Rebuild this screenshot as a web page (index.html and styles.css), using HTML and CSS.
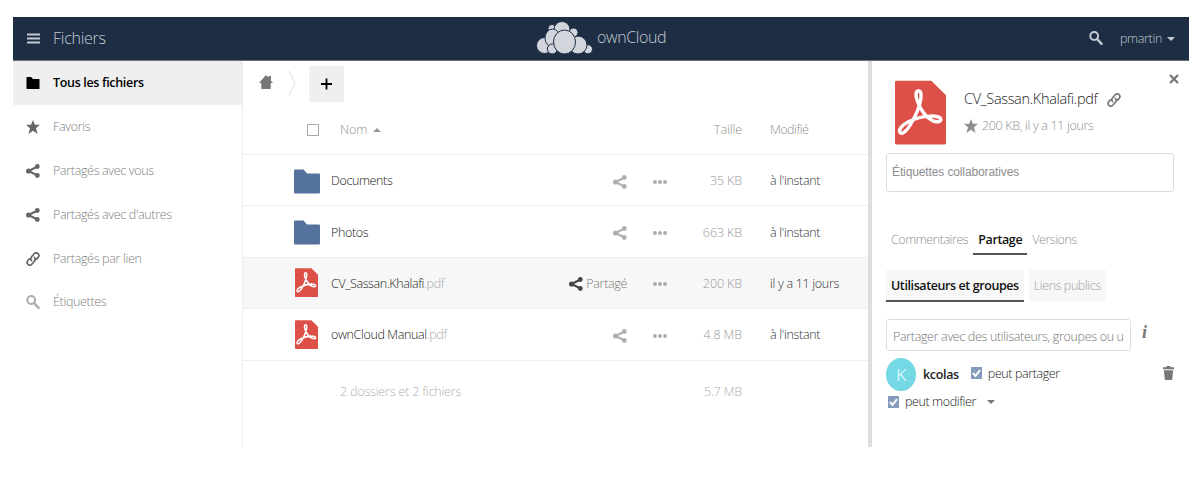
FILE: index.html
```html
<!DOCTYPE html>
<html lang="fr">
<head>
<meta charset="utf-8">
<title>Fichiers - ownCloud</title>
<link rel="stylesheet" href="styles.css">
</head>
<body>
<svg class="defs" width="0" height="0">
  <symbol id="share" viewBox="0 0 14 14"><path d="M11.5 2.5 2.5 7l9 4.5" fill="none" stroke="currentColor" stroke-width="2"/><circle cx="11.3" cy="2.5" r="2.4"/><circle cx="2.6" cy="7" r="2.6"/><circle cx="11.3" cy="11.5" r="2.4"/></symbol>
  <symbol id="star" viewBox="0 0 14 14"><path d="m7 0 1.900 4.800H14L10 8.300 11.600 14 7 10.800 2.400 14 4 8.300 0 4.800h5.100z"/></symbol>
  <symbol id="link" viewBox="0 0 14 14"><g fill="none" stroke="currentColor" stroke-width="1.7" stroke-linecap="round"><path d="M5.600 8.700C4.500 7.500 4.900 5.600 5.800 4.500L8 2c1.200-1.300 2.900-1.400 4-.4 1.200 1.100 1 2.900 0 4.100L10.600 7.200"/><path d="M8.400 5.300c1.100 1.200.7 3.100-.2 4.200L6 12c-1.200 1.300-2.900 1.400-4 .4-1.200-1.100-1-2.900 0-4.100L3.400 6.800"/></g></symbol>
  <symbol id="search" viewBox="0 0 14 14"><circle cx="5.200" cy="5" r="3.900" fill="none" stroke="currentColor" stroke-width="2"/><path d="m8 8 4.600 4.800" fill="none" stroke="currentColor" stroke-width="2.400" stroke-linecap="round"/></symbol>
  <symbol id="folder" viewBox="0 0 26 24"><path d="M1 0h8.500l3.500 4h12q1 0 1 1v18q0 1-1 1H1q-1 0-1-1V1q0-1 1-1z"/></symbol>
  <symbol id="pdf" viewBox="0 0 52 65"><path d="M1.500 0H37l15 15v48.500q0 1.500-1.500 1.500h-49Q0 65 0 63.500v-62Q0 0 1.500 0z" fill="#dd5047"/><path d="M24 10.500c-3.500 0-3 6-.8 11.500 2.500 6.500 8 15 14.500 18.500 5 2.500 9 1.500 9-.8 0-2.700-5-3.800-11-3.500-7 .3-15 2.300-22 5.800-6 3-10.500 8-8.700 10.700 2 2.800 7-1.200 11-8.200 5-8.500 9-18 10.200-25 .8-5 .5-9-2.200-9z" fill="none" stroke="#fff" stroke-width="3.500"/></symbol>
  <symbol id="dots" viewBox="0 0 14 4"><circle cx="2" cy="2" r="1.900"/><circle cx="7" cy="2" r="1.900"/><circle cx="12" cy="2" r="1.900"/></symbol>
  <symbol id="check" viewBox="0 0 11 12"><path d="M0 0h11v12H0z" fill="#869bbb"/><path d="m2 6 2.500 3L9 3.200" fill="none" stroke="#fff" stroke-width="2"/></symbol>
</svg>
<div class="app">
  <header class="topbar">
    <div class="menu">
      <svg class="burger" viewBox="0 0 13 11"><path d="M0 1.500h13M0 5.500h13M0 9.500h13" stroke="currentColor" stroke-width="2"/></svg>
      <span class="app-name">Fichiers</span>
    </div>
    <div class="brand">
      <svg class="logo" viewBox="0 0 56 34"><g fill="#d2d6dc" stroke="#1d2d44" stroke-width="1">
        <circle cx="15.500" cy="7.500" r="4"/><circle cx="37" cy="11.500" r="4.500"/><circle cx="25.500" cy="8.500" r="8"/><circle cx="8" cy="24.500" r="8"/><ellipse cx="16" cy="17" rx="7.500" ry="9"/><circle cx="51.500" cy="28.300" r="4.500"/><circle cx="41.500" cy="24" r="9"/><circle cx="15.800" cy="28" r="5"/><ellipse cx="28" cy="21" rx="11" ry="12"/></g></svg>
      <span class="brand-name">ownCloud</span>
    </div>
    <div class="user">
      <svg class="ico user-search"><use href="#search"/></svg>
      <span class="user-name">pmartin</span><i class="caret"></i>
    </div>
  </header>
  <div class="body">
    <nav class="sidebar">
      <a class="nav active"><svg class="ico nav-folder"><use href="#folder"/></svg><span>Tous les fichiers</span></a>
      <a class="nav"><svg class="ico"><use href="#star"/></svg><span>Favoris</span></a>
      <a class="nav"><svg class="ico"><use href="#share"/></svg><span>Partagés avec vous</span></a>
      <a class="nav"><svg class="ico"><use href="#share"/></svg><span>Partagés avec d'autres</span></a>
      <a class="nav"><svg class="ico"><use href="#link"/></svg><span>Partagés par lien</span></a>
      <a class="nav"><svg class="ico pale"><use href="#search"/></svg><span>Étiquettes</span></a>
    </nav>
    <main class="files">
      <div class="controls">
        <svg class="home" viewBox="0 0 14 14"><path d="M7 0 0 8h2.300v6h9.400V8H14l-2-2.300V1H9.500v1.800z"/></svg>
        <svg class="crumb" viewBox="0 0 8 26"><path d="m1 1 6 12-6 12" fill="none" stroke="#ddd"/></svg>
        <button class="add"><svg viewBox="0 0 12 12"><path d="M6 0v12M0 6h12" stroke="#000" stroke-width="2"/></svg></button>
      </div>
      <div class="head">
        <i class="box"></i><span class="h-name">Nom</span><i class="caret up"></i>
        <span class="h-size">Taille</span><span class="h-date">Modifié</span>
      </div>
      <div class="row">
        <svg class="f-ico"><use href="#folder"/></svg><span class="name">Documents</span>
        <span class="share"><svg class="ico"><use href="#share"/></svg></span><svg class="dots"><use href="#dots"/></svg>
        <span class="size">35 KB</span><span class="date">à l'instant</span>
      </div>
      <div class="row">
        <svg class="f-ico"><use href="#folder"/></svg><span class="name">Photos</span>
        <span class="share"><svg class="ico"><use href="#share"/></svg></span><svg class="dots"><use href="#dots"/></svg>
        <span class="size">663 KB</span><span class="date">à l'instant</span>
      </div>
      <div class="row selected">
        <svg class="f-pdf"><use href="#pdf"/></svg><span class="name">CV_Sassan.Khalafi<em>.pdf</em></span>
        <span class="share on"><svg class="ico"><use href="#share"/></svg>Partagé</span><svg class="dots"><use href="#dots"/></svg>
        <span class="size">200 KB</span><span class="date">il y a 11 jours</span>
      </div>
      <div class="row">
        <svg class="f-pdf"><use href="#pdf"/></svg><span class="name">ownCloud Manual<em>.pdf</em></span>
        <span class="share"><svg class="ico"><use href="#share"/></svg></span><svg class="dots"><use href="#dots"/></svg>
        <span class="size">4.8 MB</span><span class="date">à l'instant</span>
      </div>
      <div class="summary"><span class="count">2 dossiers et 2 fichiers</span><span class="total">5.7 MB</span></div>
    </main>
    <aside class="details">
      <div class="file">
        <svg class="thumb"><use href="#pdf"/></svg>
        <div class="info">
          <div class="title"><span>CV_Sassan.Khalafi.pdf</span><svg class="ico"><use href="#link"/></svg></div>
          <div class="meta"><svg class="ico"><use href="#star"/></svg><span>200 KB, il y a 11 jours</span></div>
        </div>
        <svg class="close" viewBox="0 0 10 10"><path d="m1 1 8 8M9 1 1 9" stroke="#777" stroke-width="2.300"/></svg>
      </div>
      <div class="tags">Étiquettes collaboratives</div>
      <div class="tabs"><span class="tab">Commentaires</span><span class="tab current">Partage</span><span class="tab versions">Versions</span></div>
      <div class="subtabs"><span class="sub current">Utilisateurs et groupes</span><span class="sub public">Liens publics</span></div>
      <div class="share-line"><div class="share-input"><span class="placeholder">Partager avec des utilisateurs, groupes ou u</span></div><span class="hint">i</span></div>
      <div class="person">
        <span class="avatar">K</span><b>kcolas</b><svg class="check"><use href="#check"/></svg><span class="can">peut partager</span>
        <svg class="trash" viewBox="0 0 11 14"><path d="M0 1.200h3.500V0h4v1.200H11V3.300H0zM.9 4.300h9.200L9.300 13q-.1 1-1 1H2.700q-.9 0-1-1z"/></svg>
      </div>
      <div class="perm"><svg class="check"><use href="#check"/></svg><span class="can">peut modifier</span><i class="caret"></i></div>
    </aside>
  </div>
</div>
</body>
</html>
```
FILE: styles.css
```css
* { box-sizing: border-box; }
body { margin: 0; padding: 17px 12px 0 13px; background: #fff; font: 300 12.5px/20px "Open Sans", "Noto Sans", sans-serif; letter-spacing: -.33px; color: #222; white-space: nowrap; overflow: hidden; }
svg { fill: currentColor; flex: none; display: block; }
.defs { position: absolute; }
.ico { width: 14px; height: 14px; }
.caret { width: 0; height: 0; border: 4px solid transparent; border-top: 4px solid currentColor; border-bottom: 0; }
.caret.up { border-top: 0; border-bottom: 4px solid #999; }
.app { width: 1176px; height: 430px; }
.topbar { height: 44px; background: #1d2d44; border-bottom: 1px solid #66717f; display: grid; grid-template-columns: 523px 1fr 1fr; align-items: center; color: #c4cad2; }
.menu { display: flex; align-items: center; padding-left: 14px; }
.burger { width: 13px; height: 11px; margin: -1px 13px 0 0; }
.app-name { font-size: 16px; letter-spacing: -.25px; margin-top: -2px; }
.brand { display: flex; align-items: center; }
.logo { width: 57px; height: 34px; margin: -2px 4px 0 0; }
.brand-name { font-size: 16px; letter-spacing: -.4px; margin-top: -3px; }
.user { display: flex; align-items: center; justify-content: flex-end; padding-right: 14px; }
.user-search { margin: -2px 17px 0 0; }
.user .caret { margin-left: 5px; }
.body { display: flex; height: 386px; }
.sidebar { width: 229px; }
.nav { display: flex; align-items: center; height: 43.8px; padding: 1px 0 0 13px; gap: 13px; color: #666; }
.nav span { color: #808080; }
.nav .pale { color: #aaa; }
.nav.active { background: #efefef; color: #000; }
.nav.active span { color: #000; font-weight: 600; }
.nav-folder { height: 12px; }
.files { width: 626px; border-left: 1px solid #eee; }
.controls { height: 44px; display: flex; align-items: center; padding: 1px 0 0 16px; }
.home { width: 14px; height: 14px; color: #777; margin: -4px 15px 0 0; }
.crumb { width: 8px; height: 26px; margin: -2px 13px 0 0; }
.add { width: 35px; height: 36px; background: #efefef; border: 0; border-radius: 3px; padding: 1px 0 0 12px; }
.add svg { width: 11px; height: 12px; }
.head { height: 50px; border-bottom: 1px solid #eee; display: flex; align-items: center; padding: 0 0 0 64px; color: #909090; }
.box { width: 12px; height: 12px; border: 1px solid #aaa; margin-right: 21px; }
.h-name { letter-spacing: -.1px; }
.head .caret { margin-left: 6px; }
.h-size { margin-left: auto; letter-spacing: -.1px; }
.h-date { width: 98px; margin-left: 28px; letter-spacing: -.5px; }
.row { height: 51.4px; border-bottom: 1px solid #eee; display: grid; grid-template-columns: 37px 206px 90px 40px 75px 98px; align-items: center; padding: 2px 0 0 51px; }
.row.selected { background: #f7f7f7; }
.f-ico { width: 26px; height: 25px; color: #54729b; }
.f-pdf { width: 23px; height: 29px; margin: -2px 0 0 1px; }
.name { letter-spacing: -.38px; }
.name em { font-style: normal; color: #aaa; }
.share { display: flex; align-items: center; justify-content: flex-end; gap: 3px; color: #b0b0b0; }
.share .ico { margin-top: 1px; }
.share.on { color: #777; }
.share.on .ico { color: #444; }
.dots { width: 14px; height: 4px; color: #aaa; justify-self: end; margin-top: 1px; }
.size { color: #999; text-align: right; letter-spacing: -.1px; }
.date { padding-left: 28px; color: #333; letter-spacing: -.3px; }
.summary { height: 62px; display: flex; align-items: center; padding: 0 126px 0 97px; justify-content: space-between; color: #b0b0b0; letter-spacing: -.18px; }
.details { width: 321px; border-left: 4px solid #ddd; padding: 0 15px 0 14px; }
.file { height: 92px; padding: 19px 0 0 9px; display: flex; margin-right: -5px; }
.thumb { width: 51px; height: 65px; }
.info { padding: 9px 0 0 18px; flex: 1; }
.title { display: flex; align-items: center; gap: 9px; font-size: 14.5px; color: #222; }
.title .ico { color: #777; margin-top: 2px; }
.meta { display: flex; align-items: center; gap: 4px; color: #909090; margin-top: 7px; }
.close { width: 10px; height: 10px; margin-top: -6px; }
.tags { height: 39px; width: 288px; border: 1px solid #ddd; border-radius: 3px; font: 400 12px/37px "Liberation Sans", sans-serif; letter-spacing: -.12px; color: #8e8e8e; padding-left: 5px; }
.tabs { display: flex; margin-top: 36px; height: 27px; color: #909090; letter-spacing: -.45px; }
.tab { padding: 0 5px; line-height: 24px; }
.tab.current, .sub.current { font-weight: 600; color: #111; border-bottom: 2px solid #555; }
.tab.current { letter-spacing: -.38px; }
.subtabs { display: flex; gap: 5px; margin-top: 15px; letter-spacing: -.41px; }
.sub { height: 32px; line-height: 32px; padding: 0 5px; background: #f7f7f7; color: #a0a0a0; }
.share-line { display: flex; margin-top: 17px; }
.share-input { width: 245px; height: 32px; border: 1px solid #ddd; border-radius: 3px; color: #777; line-height: 33px; padding: 0 5px 0 6px; }
.placeholder { display: block; letter-spacing: -.33px; }
.hint { font: italic 700 18px/26px "Liberation Serif", serif; color: #777; margin-left: 11px; }
.person { display: flex; align-items: center; margin-top: 7px; height: 33px; }
.avatar { width: 30px; height: 33px; border-radius: 50%; background: #74d9e5; color: #fff; text-align: center; font-size: 17px; line-height: 33px; margin-right: 7px; }
.person b { font-weight: 600; margin-right: 12px; }
.check { width: 11px; height: 12px; margin-right: 6px; }
.person .check { margin-top: -3px; }
.person .can { margin-top: -1px; }
.can { letter-spacing: -.4px; }
.trash { width: 11px; height: 14px; color: #777; margin: -4px 0 0 auto; }
.perm { display: flex; align-items: center; padding-left: 2px; }
.perm .can { margin-top: 1px; }
.perm .caret { margin-left: 11px; color: #777; }
```
